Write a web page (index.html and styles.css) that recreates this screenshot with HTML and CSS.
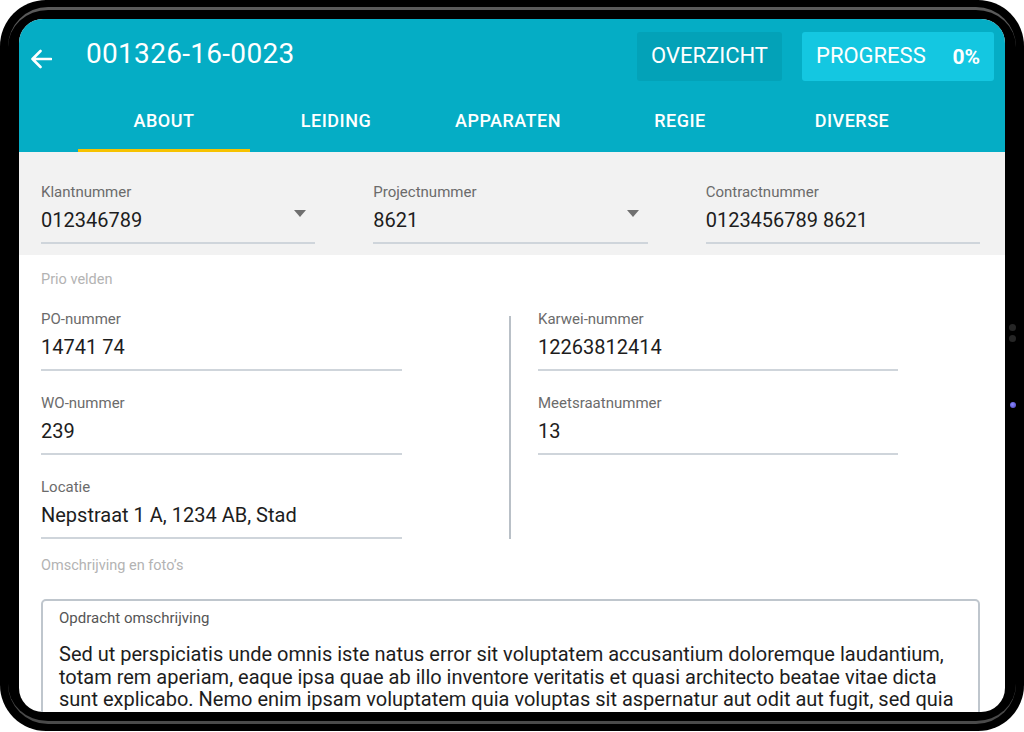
FILE: index.html
```html
<!DOCTYPE html>
<html lang="en">
<head>
  <meta charset="UTF-8">
  <meta name="viewport" content="width=device-width, initial-scale=1.0">
  <title>001326-16-0023</title>
  <link rel="stylesheet" href="styles.css">
</head>
<body>
  <div class="tablet">
    <span class="sensor"></span>
    <span class="sensor sensor-low"></span>
    <span class="led"></span>

    <div class="screen">
      <header class="appbar">
        <div class="topbar">
          <svg class="back" width="22" height="20" viewBox="0 0 22 20">
            <path d="M21 10H2.5M10.5 2L2.5 10l8 8" fill="none" stroke="#fff" stroke-width="2.6" stroke-linecap="round" stroke-linejoin="round"/>
          </svg>
          <h1 class="title">001326-16-0023</h1>
          <div class="actions">
            <button class="btn btn-dark">OVERZICHT</button>
            <button class="btn btn-light"><span>PROGRESS</span><b>0%</b></button>
          </div>
        </div>
        <nav class="tabs">
          <a class="tab active">ABOUT</a>
          <a class="tab">LEIDING</a>
          <a class="tab">APPARATEN</a>
          <a class="tab">REGIE</a>
          <a class="tab">DIVERSE</a>
        </nav>
      </header>

      <section class="head-fields">
        <div class="field">
          <label>Klantnummer</label>
          <div class="value select">012346789<i class="caret"></i></div>
        </div>
        <div class="field">
          <label>Projectnummer</label>
          <div class="value select">8621<i class="caret"></i></div>
        </div>
        <div class="field">
          <label>Contractnummer</label>
          <div class="value">0123456789 8621</div>
        </div>
      </section>

      <section class="content">
        <div class="group-title">Prio velden</div>
        <div class="prio">
          <div class="col col-left">
            <div class="field">
              <label>PO-nummer</label>
              <div class="value">14741 74</div>
            </div>
            <div class="field">
              <label>WO-nummer</label>
              <div class="value">239</div>
            </div>
            <div class="field">
              <label>Locatie</label>
              <div class="value">Nepstraat 1 A, 1234 AB, Stad</div>
            </div>
          </div>
          <div class="divider"></div>
          <div class="col col-right">
            <div class="field">
              <label>Karwei-nummer</label>
              <div class="value">12263812414</div>
            </div>
            <div class="field">
              <label>Meetsraatnummer</label>
              <div class="value">13</div>
            </div>
          </div>
        </div>

        <div class="group-title">Omschrijving en foto’s</div>
        <div class="textbox">
          <label>Opdracht omschrijving</label>
          <p>Sed ut perspiciatis unde omnis iste natus error sit voluptatem accusantium doloremque laudantium, totam rem aperiam, eaque ipsa quae ab illo inventore veritatis et quasi architecto beatae vitae dicta sunt explicabo. Nemo enim ipsam voluptatem quia voluptas sit aspernatur aut odit aut fugit, sed quia consequuntur magni dolores eos qui ratione voluptatem sequi nesciunt.</p>
        </div>
      </section>
    </div>
  </div>
</body>
</html>
```

FILE: styles.css
```css
html, body {
  margin: 0;
  background: #fff;
}
body {
  font-family: Roboto, 'Liberation Sans', sans-serif;
  color: #222;
}

/* device frame */
.tablet {
  position: relative;
  width: 1024px;
  height: 731px;
  box-sizing: border-box;
  padding: 19px;
  background: #000;
  border-radius: 46px;
}
.tablet::before {
  content: '';
  position: absolute;
  inset: 7px 8px;
  border-radius: 40px;
  border-top: 3px solid #5a5a5a;
  border-bottom: 3px solid #4a4a4a;
  border-left: 0;
  border-right: 0;
}
.sensor {
  position: absolute;
  right: 8px;
  top: 324px;
  width: 7px;
  height: 7px;
  border-radius: 50%;
  background: #262626;
}
.sensor-low {
  top: 335px;
}
.led {
  position: absolute;
  right: 8px;
  top: 402px;
  width: 6px;
  height: 6px;
  border-radius: 50%;
  background: radial-gradient(circle at 40% 40%, #8a8aff, #4b3fb8);
}
.screen {
  position: relative;
  height: 693px;
  background: #fff;
  border-radius: 24px;
  overflow: hidden;
}

/* app bar */
.appbar {
  background: #05adc5;
  color: #fff;
}
.topbar {
  display: flex;
  align-items: center;
  padding: 13px 11px 9px 11px;
  height: 49px;
}
.back {
  flex: none;
  margin-top: 4px;
}
.title {
  margin: 0 0 6px 34px;
  font-size: 28px;
  font-weight: 400;
  letter-spacing: 0.3px;
}
.actions {
  margin-left: auto;
  display: flex;
  gap: 20px;
}
.btn {
  height: 49px;
  border: none;
  border-radius: 3px;
  color: #fff;
  font-family: inherit;
  font-size: 22px;
  font-weight: 400;
  padding: 0 14px 2px;
}
.btn-dark {
  width: 145px;
  background: #03a2b8;
}
.btn-light {
  width: 192px;
  background: #14c7e1;
  display: flex;
  align-items: center;
  justify-content: space-between;
}
.btn-light b {
  font-size: 21px;
  font-weight: 700;
  padding-top: 3px;
}

.tabs {
  display: flex;
  padding-left: 59px;
  height: 62px;
}
.tab {
  width: 172px;
  display: flex;
  align-items: center;
  justify-content: center;
  box-sizing: border-box;
  padding-top: 2px;
  font-size: 18px;
  font-weight: 500;
  letter-spacing: 0.5px;
  border-bottom: 3px solid transparent;
}
.tab.active {
  border-bottom-color: #f6c200;
}

/* form fields */
.field label {
  display: block;
  font-size: 15px;
  line-height: 18px;
  color: #6b6b6b;
}
.value {
  margin-top: 7px;
  font-size: 20px;
  line-height: 24px;
  padding-bottom: 10px;
  border-bottom: 2px solid #cfd5db;
  color: #1d1d1d;
}
.select {
  display: flex;
  justify-content: space-between;
  align-items: center;
  padding-right: 9px;
}
.caret {
  width: 0;
  height: 0;
  border-left: 6px solid transparent;
  border-right: 6px solid transparent;
  border-top: 7px solid #707070;
  margin-top: -14px;
}

.head-fields {
  display: grid;
  grid-template-columns: repeat(3, 1fr);
  column-gap: 58px;
  padding: 31px 25px 11px 22px;
  background: #f2f2f2;
}

.content {
  padding: 16px 25px 0 22px;
}
.group-title {
  font-size: 14.5px;
  line-height: 18px;
  color: #b3b3b3;
}
.prio {
  display: flex;
  margin-top: 21px;
}
.col {
  display: flex;
  flex-direction: column;
  gap: 23px;
}
.col-left {
  width: 361px;
}
.divider {
  width: 2px;
  margin: 6px 0 0 107px;
  background: #b9c0c7;
}
.col-right {
  width: 360px;
  margin-left: 27px;
}
.prio + .group-title {
  margin-top: 18px;
}

.textbox {
  margin-top: 24px;
  border: 2px solid #bfc6cd;
  border-radius: 5px;
  padding: 8px 16px 20px 16px;
}
.textbox label {
  display: block;
  font-size: 15px;
  line-height: 18px;
  color: #555;
}
.textbox p {
  margin: 16px 0 0;
  font-size: 20px;
  line-height: 22.5px;
  color: #1d1d1d;
}
```
